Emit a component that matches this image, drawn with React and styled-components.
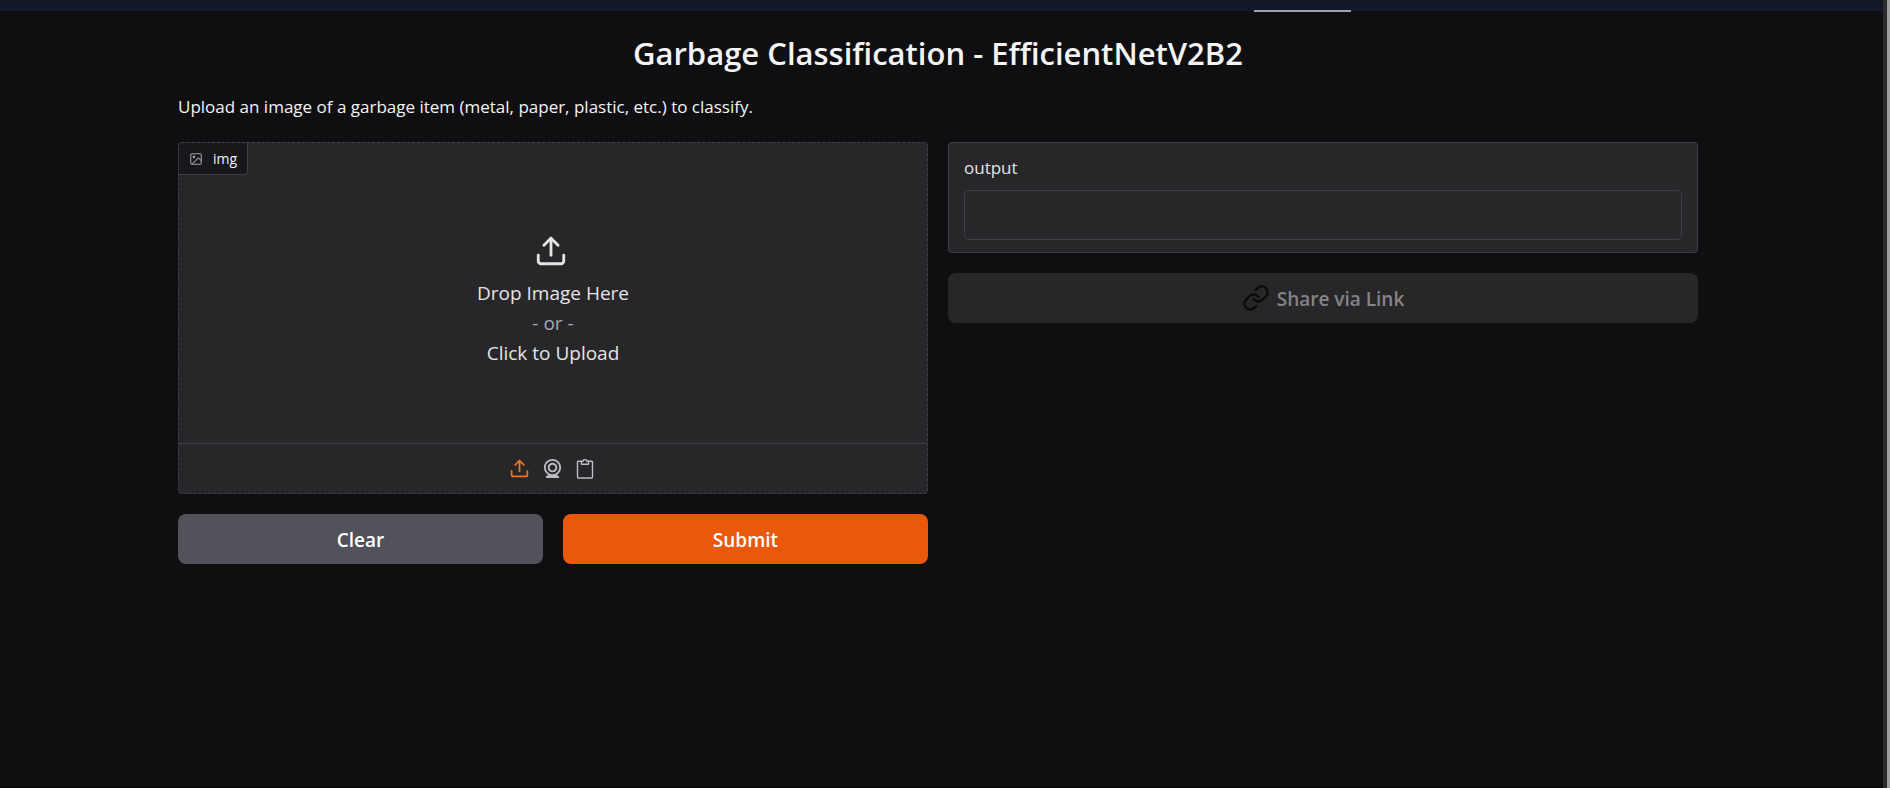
import React from "react";
import styled, { createGlobalStyle } from "styled-components";
import { Upload } from "lucide-react";

const GlobalStyle = createGlobalStyle`
  *, *::before, *::after { box-sizing: border-box; }
  body {
    margin: 0;
    background: #0f0f11;
    color: #f4f4f5;
    font-family: "Segoe UI", "Open Sans", "Noto Sans", sans-serif;
  }
  button, input { font: inherit; color: inherit; }
`;

const Shell = styled.div`
  display: flex;
  min-height: 100vh;
`;

const Page = styled.div`
  flex: 1;
  min-width: 0;
  display: flex;
  flex-direction: column;
  border-bottom: 2px solid #0b0a0b;
`;

const ScrollEdge = styled.div`
  width: 7px;
  background: #9e9e9e;
  border-left: 4px solid #2c2c2c;
`;

const TopStrip = styled.header`
  position: relative;
  height: 11px;
  background: linear-gradient(#101624, #111a2b);
`;

const ActiveMark = styled.span`
  position: absolute;
  top: 10px;
  left: 1254px;
  width: 97px;
  height: 2px;
  background: #9ca3af;
`;

const Body = styled.div`
  padding: 20px 7px 20px 0;
`;

const Main = styled.main`
  width: 100%;
  max-width: 1520px;
  margin: 0 auto;
`;

const Title = styled.h1`
  margin: 0;
  text-align: center;
  font-size: 31px;
  line-height: 44px;
  font-weight: 600;
`;

const Description = styled.p`
  margin: 18px 0 20px;
  font-size: 17px;
  line-height: 28px;
  padding-bottom: 1px;
`;

const Columns = styled.div`
  display: grid;
  grid-template-columns: 1fr 1fr;
  gap: 20px;
  align-items: start;
`;

const Column = styled.section`
  display: flex;
  flex-direction: column;
  gap: 20px;
`;

const DropPanel = styled.div`
  position: relative;
  height: 352px;
  display: flex;
  flex-direction: column;
  background: #27272a;
  border: 1px dashed #3f3f46;
  border-radius: 4px;
  overflow: hidden;
`;

const PanelTag = styled.span`
  position: absolute;
  top: 0;
  left: 0;
  height: 32px;
  display: flex;
  align-items: center;
  gap: 10px;
  padding: 0 10px;
  background: #18181b;
  border: solid #3f3f46;
  border-width: 0 1px 1px 0;
  border-radius: 0 0 4px 0;
  font-size: 14px;
  line-height: 20px;
  svg { color: #a1a1aa; }
`;

const DropButton = styled.button`
  flex: 1;
  display: flex;
  flex-direction: column;
  align-items: center;
  justify-content: center;
  padding: 15px 0 0;
  border: 0;
  background: none;
  color: #e4e4e7;
  font-size: 19px;
  line-height: 30px;
  cursor: pointer;
  svg { margin: 0 4px 10px 0; }
`;

const Muted = styled.span`
  color: #a9a9b8;
`;

const SourceBar = styled.div`
  height: 50px;
  display: flex;
  align-items: center;
  justify-content: center;
  gap: 11px;
  padding-right: 2px;
  border-top: 1px solid #3f3f46;
`;

const SourceButton = styled.button`
  display: flex;
  padding: 0;
  border: 0;
  background: none;
  color: ${(p) => (p.$active ? "#f97316" : "#bbbbc2")};
  cursor: pointer;
`;

const ButtonRow = styled.div`
  display: grid;
  grid-template-columns: 1fr 1fr;
  gap: 20px;
`;

const Button = styled.button`
  height: 50px;
  display: flex;
  align-items: center;
  justify-content: center;
  gap: 7px;
  padding: 2px 20px 0;
  border: 0;
  border-radius: 8px;
  background: ${(p) => p.$fill};
  color: #fff;
  font-size: 19px;
  line-height: 28px;
  font-weight: 600;
  cursor: pointer;
  svg { margin-bottom: 2px; }
  &:disabled {
    color: #848486;
    cursor: not-allowed;
  }
`;

const OutputPanel = styled.div`
  display: flex;
  flex-direction: column;
  gap: 9px;
  padding: 11px 15px 12px;
  background: #27272a;
  border: 1px solid #3f3f46;
  border-radius: 4px;
`;

const OutputLabel = styled.label`
  font-size: 17px;
  line-height: 27px;
  color: #e4e4e7;
`;

const OutputField = styled.input`
  width: 100%;
  height: 50px;
  padding: 0 12px;
  background: #27272a;
  border: 1px solid #3f3f46;
  border-radius: 5px;
  outline: 0;
`;

const ImageIcon = () => (
  <svg width="14" height="14" viewBox="0 0 24 24" fill="none" stroke="currentColor" strokeWidth="1.8" strokeLinejoin="round" aria-hidden="true">
    <rect x="3" y="3" width="18" height="18" rx="2" />
    <circle cx="8.5" cy="8.5" r="1.5" />
    <path d="M21 15l-5-5L5 21" />
  </svg>
);

const WebcamIcon = () => (
  <svg width="23" height="23" viewBox="0 0 24 24" fill="currentColor" aria-hidden="true">
    <path d="M12 2c-4.963 0-9 4.038-9 9c0 3.328 1.82 6.232 4.513 7.79l-2.067 1.378A1 1 0 0 0 6 22h12a1 1 0 0 0 .555-1.832l-2.067-1.378C19.18 17.232 21 14.328 21 11c0-4.962-4.037-9-9-9zm0 16c-3.859 0-7-3.141-7-7c0-3.86 3.141-7 7-7s7 3.14 7 7c0 3.859-3.141 7-7 7z" />
    <path d="M12 6c-2.757 0-5 2.243-5 5s2.243 5 5 5s5-2.243 5-5s-2.243-5-5-5zm0 8c-1.654 0-3-1.346-3-3s1.346-3 3-3s3 1.346 3 3s-1.346 3-3 3z" />
  </svg>
);

const ClipboardIcon = () => (
  <svg width="20" height="20" viewBox="0 0 20 20" fill="none" stroke="currentColor" strokeWidth="1.4" strokeLinejoin="round" aria-hidden="true">
    <path d="M6.5 2.2H3.2a.7.7 0 0 0-.7.7v15.4a.7.7 0 0 0 .7.7h13.6a.7.7 0 0 0 .7-.7V2.9a.7.7 0 0 0-.7-.7h-3.3" />
    <path d="M6.5 2.2H8a2 1.6 0 0 1 4 0h1.5v3h-7z" />
  </svg>
);

const LinkIcon = () => (
  <svg width="28" height="28" viewBox="0 0 24 24" fill="none" stroke="#0a0a0b" strokeWidth="2" strokeLinecap="round" strokeLinejoin="round" aria-hidden="true">
    <path d="M10 13a5 5 0 0 0 7.54.54l3-3a5 5 0 0 0-7.07-7.07l-1.72 1.71" />
    <path d="M14 11a5 5 0 0 0-7.54-.54l-3 3a5 5 0 0 0 7.07 7.07l1.71-1.71" />
  </svg>
);

export default function App() {
  return (
    <>
      <GlobalStyle />
      <Shell>
        <Page>
          <TopStrip>
            <ActiveMark />
          </TopStrip>
          <Body>
            <Main>
              <Title>Garbage Classification - EfficientNetV2B2</Title>
              <Description>
                Upload an image of a garbage item (metal, paper, plastic, etc.) to classify.
              </Description>
              <Columns>
                <Column>
                  <DropPanel>
                    <DropButton type="button">
                      <Upload size={34} aria-hidden="true" />
                      <span>Drop Image Here</span>
                      <Muted>- or -</Muted>
                      <span>Click to Upload</span>
                    </DropButton>
                    <SourceBar>
                      <SourceButton type="button" $active aria-label="Upload file">
                        <Upload size={21} aria-hidden="true" />
                      </SourceButton>
                      <SourceButton type="button" aria-label="Capture from camera">
                        <WebcamIcon />
                      </SourceButton>
                      <SourceButton type="button" aria-label="Paste from clipboard">
                        <ClipboardIcon />
                      </SourceButton>
                    </SourceBar>
                    <PanelTag>
                      <ImageIcon />
                      img
                    </PanelTag>
                  </DropPanel>
                  <ButtonRow>
                    <Button type="button" $fill="#52525b">Clear</Button>
                    <Button type="button" $fill="#ea580c">Submit</Button>
                  </ButtonRow>
                </Column>
                <Column>
                  <OutputPanel>
                    <OutputLabel htmlFor="output">output</OutputLabel>
                    <OutputField id="output" type="text" readOnly />
                  </OutputPanel>
                  <Button type="button" $fill="#27272a" disabled>
                    <LinkIcon />
                    Share via Link
                  </Button>
                </Column>
              </Columns>
            </Main>
          </Body>
        </Page>
        <ScrollEdge />
      </Shell>
    </>
  );
}
